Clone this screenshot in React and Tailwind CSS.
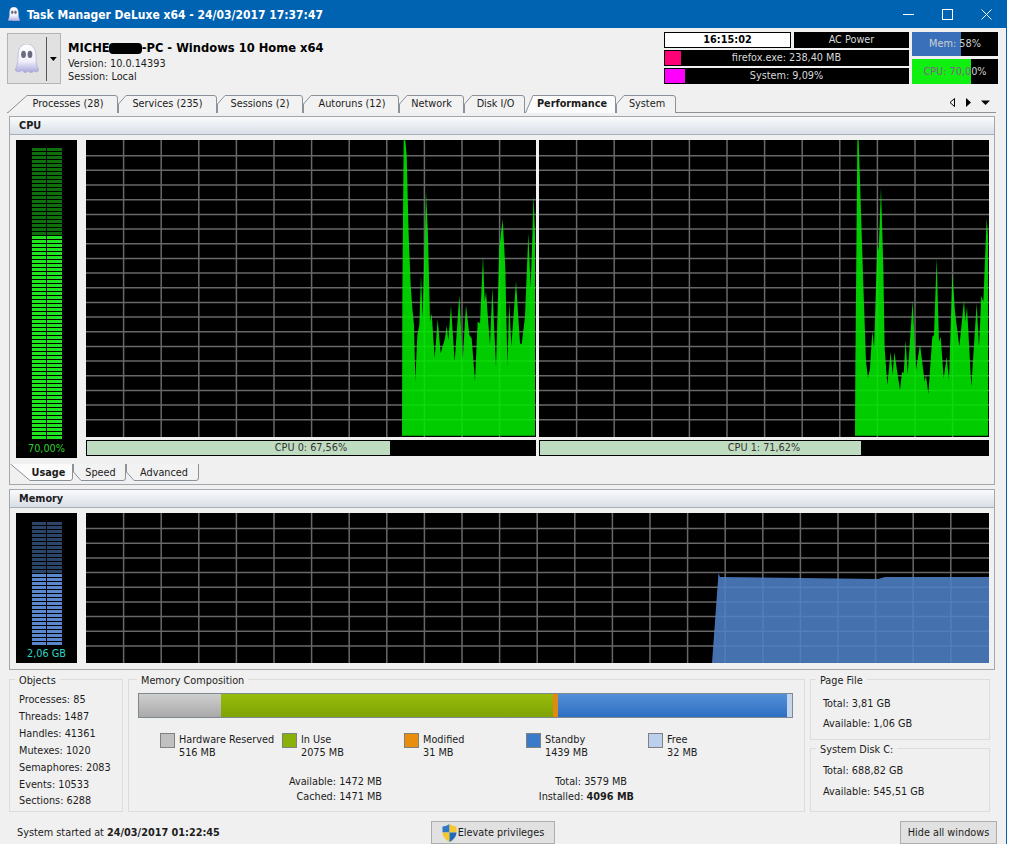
const cpu0 = [[66,902],[67,500],[71,16],[76,16],[80,60],[86,300],[92,450],[97,520],[102,570],[106,738],[112,600],[118,570],[123,420],[128,550],[138,170],[144,300],[150,560],[155,535],[164,670],[173,552],[182,655],[195,610],[200,572],[205,615],[213,512],[224,680],[238,480],[248,675],[258,510],[268,600],[275,610],[285,738],[293,560],[300,565],[309,362],[314,500],[318,470],[330,630],[337,458],[348,695],[358,340],[368,252],[376,400],[382,690],[388,500],[394,635],[408,438],[420,625],[425,628],[435,545],[445,295],[452,458],[461,180],[465,300],[465,902]]
const cpu1 = [[45,902],[46,700],[52,16],[56,16],[62,200],[70,450],[78,680],[84,730],[90,700],[97,588],[102,640],[112,330],[116,345],[123,158],[130,400],[134,640],[142,750],[152,650],[158,720],[163,652],[180,765],[186,710],[191,715],[197,615],[203,718],[218,497],[228,705],[240,628],[254,740],[258,720],[265,778],[277,605],[282,600],[290,370],[297,620],[302,605],[311,730],[320,665],[327,735],[337,415],[345,530],[358,635],[372,495],[376,560],[381,515],[394,755],[410,505],[417,635],[424,482],[430,500],[440,250],[444,300],[444,902]]

const topTabs = [
  { label: 'Processes (28)', w: 111, cls: 'w-[111px] pl-[11px]', slant: 20 },
  { label: 'Services (235)', w: 99, cls: 'w-[99px]' },
  { label: 'Sessions (2)', w: 86, cls: 'w-[86px]' },
  { label: 'Autoruns (12)', w: 96, cls: 'w-[96px] pl-[2px]' },
  { label: 'Network', w: 65, cls: 'w-[65px]' },
  { label: 'Disk I/O', w: 61, cls: 'w-[61px] pl-[2px]' },
  { label: 'Performance', w: 91, cls: 'w-[91px] pl-[3px]', slant: 8, active: true },
  { label: 'System', w: 60, cls: 'w-[60px] pl-[2px]' },
]

const subTabs = [
  { label: 'Usage', w: 63, cls: 'w-[63px] pl-[14px]', slant: 20, active: true },
  { label: 'Speed', w: 53, cls: 'w-[53px] pl-[2px]' },
  { label: 'Advanced', w: 73, cls: 'w-[73px] pl-[3px]' },
]

const objects = ['Processes: 85', 'Threads: 1487', 'Handles: 41361', 'Mutexes: 1020', 'Semaphores: 2083', 'Events: 10533', 'Sections: 6288']

const legend = [
  { name: 'Hardware Reserved', size: '516 MB', color: 'bg-[#c0c0c0]' },
  { name: 'In Use', size: '2075 MB', color: 'bg-[#8ab00a]' },
  { name: 'Modified', size: '31 MB', color: 'bg-[#e88e0c]' },
  { name: 'Standby', size: '1439 MB', color: 'bg-[#3a7ac8]' },
  { name: 'Free', size: '32 MB', color: 'bg-[#bcd0ee]' },
]

function Ghost({ size, id }) {
  return (
    <svg width={size} height={size * 1.2} viewBox="0 0 24 29" className="shrink-0">
      <defs>
        <linearGradient id={id} x1="0" y1="0" x2="0" y2="1">
          <stop offset="0" stopColor="#ffffff" />
          <stop offset="0.6" stopColor="#f2f0fb" />
          <stop offset="1" stopColor="#a9a6dc" />
        </linearGradient>
      </defs>
      <path
        d="M12 0C5 0 3 6 3 12C3 18 2 23 0 26C2 29 5 28 7 26.5C9 29 11 29.5 13 27C15 29.5 18 29 19 27C21 29 23 28 24 26C21 22 21 17 21 12C21 6 18 0 12 0Z"
        fill={`url(#${id})`}
        stroke="#9a98c8"
        strokeWidth="0.5"
      />
      <ellipse cx="8.5" cy="10.5" rx="2.4" ry="3.6" fill="#6b6b80" />
      <ellipse cx="15" cy="10.5" rx="2.4" ry="3.6" fill="#6b6b80" />
    </svg>
  )
}

function Shield() {
  return (
    <svg width="15" height="18" viewBox="0 0 15 18" className="shrink-0">
      <path d="M7.5 0C5.5 1.6 3 2.4 0.5 2.5V8.5H7.5Z" fill="#2f78c8" />
      <path d="M7.5 0C9.5 1.6 12 2.4 14.5 2.5V8.5H7.5Z" fill="#f6c62e" />
      <path d="M0.5 8.5C0.7 12.6 3.4 15.8 7.5 18V8.5Z" fill="#f6c62e" />
      <path d="M14.5 8.5C14.3 12.6 11.6 15.8 7.5 18V8.5Z" fill="#2468b8" />
    </svg>
  )
}

function Tab({ tab, bottom }) {
  const h = bottom ? 17 : 18
  const w = tab.w
  const s = tab.slant
  const d = s
    ? `M0.5 ${h} L${s} 0.5 H${w - 3} Q${w - 0.5} 0.5 ${w - 0.5} 3 V${h}`
    : `M0.5 ${h} V9 L8 0.5 H${w - 3} Q${w - 0.5} 0.5 ${w - 0.5} 3 V${h}`
  return (
    <div className={`relative flex items-center justify-center h-[18px] pt-px text-[10.8px] ${tab.cls} ${tab.active ? 'font-bold z-10' : ''}`}>
      <svg width={w} height={h} className={`absolute left-0 top-0 ${bottom ? '-scale-y-100' : ''}`}>
        <path d={d} fill={tab.active ? '#fbfbfb' : '#f2f2f2'} stroke="#8a9199" />
      </svg>
      <span className="relative">{tab.label}</span>
    </div>
  )
}

function Graph({ w, h, x0, y0, pts, fill }) {
  const verticals = []
  for (let x = 37.6; x < w; x += 37.6) verticals.push(x)
  const horizontals = []
  for (let y = y0; y < h - 12; y += 14.67) horizontals.push(y)
  return (
    <svg width={w} height={h} className="block bg-black shrink-0">
      {verticals.map(x => <line key={x} x1={x} x2={x} y1="0" y2={h} stroke="#686868" strokeWidth="1.5" />)}
      {horizontals.map(y => <line key={y} x1="0" x2={w} y1={y} y2={y} stroke="#686868" strokeWidth="1.5" />)}
      <polygon points={pts.map(p => `${p[0] / 3 + x0},${p[1] / 3 - 5}`).join(' ')} fill={fill} fillOpacity="0.88" />
    </svg>
  )
}

function Meter({ rows, lit, on, off, text, value, top, height }) {
  const cells = []
  for (let i = 0; i < rows; i++) {
    const cls = i >= rows - lit ? on : off
    cells.push(<div key={`a${i}`} className={`h-[3px] ${cls}`} />)
    cells.push(<div key={`b${i}`} className={`h-[3px] ${cls}`} />)
  }
  return (
    <div className={`w-[61px] ${height} bg-black flex flex-col items-center shrink-0 ${top}`}>
      <div className="grid grid-cols-2 gap-px w-[30px]">{cells}</div>
      <div className={`mt-auto h-[18px] pt-px flex items-center text-[10.8px] ${text}`}>{value}</div>
    </div>
  )
}

function Usage({ label, bar }) {
  return (
    <div className={`w-[450px] h-[16px] pt-px border border-black flex items-center justify-center text-[10.8px] text-[#333] ${bar}`}>
      {label}
    </div>
  )
}

function PanelHeader({ children }) {
  return (
    <div className="h-[18px] pt-[2px] px-[9px] flex items-center font-bold text-[10.8px] border-b border-[#a9b0b8] bg-linear-to-b from-[#fafbfc] to-[#d9dfe7]">
      {children}
    </div>
  )
}

function Group({ title, cls, left, children }) {
  return (
    <div className={`relative border border-[#dcdcdc] ${cls}`}>
      <div className={`absolute -top-[6px] px-[4px] bg-[#f0f0f0] text-[10.8px] leading-[14px] ${left}`}>{title}</div>
      {children}
    </div>
  )
}

export default function App() {
  return (
    <div className="w-[1007px] h-[844px] overflow-hidden bg-[#f0f0f0] border-r border-[#0063b1] text-[#1c1c1c] font-['DejaVu_Sans_Condensed','DejaVu_Sans',sans-serif] flex flex-col">
      {/* title bar */}
      <div className="h-[28px] shrink-0 bg-[#0063b1] flex items-center pl-[8px] text-white">
        <Ghost size={12} id="ghost-small" />
        <span className="ml-[7px] pt-px text-[12px] font-bold">Task Manager DeLuxe x64 - 24/03/2017 17:37:47</span>
        <div className="ml-auto flex h-full">
          <div className="w-[39px] flex items-center justify-center">
            <svg width="11" height="11"><path d="M0 5.5H11" stroke="#fff" /></svg>
          </div>
          <div className="w-[39px] flex items-center justify-center">
            <svg width="11" height="11"><rect x="0.5" y="0.5" width="10" height="10" fill="none" stroke="#fff" /></svg>
          </div>
          <div className="w-[39px] flex items-center justify-center">
            <svg width="11" height="11"><path d="M0.5 0.5L10.5 10.5M10.5 0.5L0.5 10.5" stroke="#fff" /></svg>
          </div>
        </div>
      </div>

      {/* header */}
      <div className="h-[67px] shrink-0 flex pl-[7px] pr-[8px]">
        <div className="mt-[5px] w-[54px] h-[51px] bg-[#e1e1e1] border border-[#b4b4b4] flex items-center">
          <div className="w-[39px] flex justify-center">
            <Ghost size={24} id="ghost-big" />
          </div>
          <div className="w-px h-[44px] bg-[#555]" />
          <svg width="13" height="6" viewBox="0 0 13 6"><path d="M3 1H10L6.5 5Z" fill="#000" /></svg>
        </div>
        <div className="ml-[7px] pt-[12px]">
          <div className="h-[16px] flex items-center text-[12.8px] font-bold text-black">
            MICHE<span className="inline-block w-[33px] h-[11px] bg-black rounded-sm -ml-[1px]" />-PC - Windows 10 Home x64
          </div>
          <div className="text-[10.8px] leading-[13px] mt-[1px]">Version: 10.0.14393</div>
          <div className="text-[10.8px] leading-[13px]">Session: Local</div>
        </div>
        <div className="ml-auto mt-[4px] flex gap-[3px] text-[10.8px]">
          <div className="w-[245px] flex flex-col gap-[2px]">
            <div className="flex gap-[3px] h-[16px]">
              <div className="w-[127px] pt-px bg-white border border-black flex items-center justify-center font-bold text-black">16:15:02</div>
              <div className="w-[115px] pt-px bg-black text-[#d8d8d8] flex items-center justify-center">AC Power</div>
            </div>
            <div className="h-[16px] pt-px flex items-center justify-center text-[#d8d8d8] border border-black bg-[linear-gradient(90deg,#ff0077_16px,#000_16px)]">firefox.exe: 238,40 MB</div>
            <div className="h-[16px] pt-px flex items-center justify-center text-[#d8d8d8] border border-black bg-[linear-gradient(90deg,#ff00ff_20px,#000_20px)]">System: 9,09%</div>
          </div>
          <div className="w-[86px] flex flex-col gap-[3px]">
            <div className="h-[24px] pt-px flex items-center justify-center text-[#d0d0d0] bg-[linear-gradient(90deg,#3a70ba_49px,#000_49px)]">Mem: 58%</div>
            <div className="h-[25px] pt-px flex items-center justify-center text-[#d0d0d0] bg-[linear-gradient(90deg,#10f010_59px,#000_59px)]">
              <span className="text-[#80608a]">CPU: 70,0</span>0%
            </div>
          </div>
        </div>
      </div>

      {/* tabs */}
      <div className="h-[18px] shrink-0 ml-[7px] mr-[10px] flex border-b border-[#8a9199]">
        {topTabs.map(t => <Tab key={t.label} tab={t} />)}
        <div className="ml-auto flex items-center gap-[9px] pb-[3px] pr-[6px]">
          <svg width="7" height="9"><path d="M5.5 0.5V8.5L1 4.5Z" fill="#f0f0f0" stroke="#000" /></svg>
          <svg width="7" height="9"><path d="M1 0V9L6 4.5Z" fill="#000" /></svg>
          <svg width="9" height="9"><path d="M0 2.5H9L4.5 7Z" fill="#000" /></svg>
        </div>
      </div>

      {/* CPU panel */}
      <div className="mt-[3px] ml-[9px] w-[986px] h-[369px] shrink-0 border border-[#a4a8ac]">
        <PanelHeader>CPU</PanelHeader>
        <div className="flex pt-[5px] pl-[6px]">
          <Meter rows={73} lit={51} on="bg-[#1fe41f]" off="bg-[#0d700d]" text="text-[#2fd02f]" value="70,00%" top="pt-[8px]" height="h-[318px]" />
          <div className="ml-[9px] flex gap-[3px]">
            <div className="flex flex-col gap-[3px]">
              <Graph w={450} h={297} x0={294} y0={15.7} pts={cpu0} fill="#00e800" />
              <Usage label="CPU 0: 67,56%" bar="bg-[linear-gradient(90deg,#c0dcc0_67.56%,#000_67.56%)]" />
            </div>
            <div className="flex flex-col gap-[3px]">
              <Graph w={450} h={297} x0={301} y0={15.7} pts={cpu1} fill="#00e800" />
              <Usage label="CPU 1: 71,62%" bar="bg-[linear-gradient(90deg,#c0dcc0_71.62%,#000_71.62%)]" />
            </div>
          </div>
        </div>
        <div className="flex mt-[6px]">
          {subTabs.map(t => <Tab key={t.label} tab={t} bottom />)}
        </div>
      </div>

      {/* Memory panel */}
      <div className="mt-[4px] ml-[9px] w-[986px] h-[181px] shrink-0 border border-[#a4a8ac]">
        <PanelHeader>Memory</PanelHeader>
        <div className="flex pt-[5px] pl-[6px]">
          <Meter rows={31} lit={18} on="bg-[#5a86cc]" off="bg-[#2c4468]" text="text-[#2fd6c6]" value="2,06 GB" top="pt-[9px]" height="h-[150px]" />
          <svg width="903" height="150" className="ml-[9px] block bg-black shrink-0">
            {Array.from({ length: 23 }, (_, i) => (i + 1) * 37.6).map(x => (
              <line key={x} x1={x} x2={x} y1="0" y2="150" stroke="#686868" strokeWidth="1.5" />
            ))}
            {Array.from({ length: 9 }, (_, i) => 15.6 + i * 14.67).map(y => (
              <line key={y} x1="0" x2="903" y1={y} y2={y} stroke="#686868" strokeWidth="1.5" />
            ))}
            <polygon points="626,150 632.5,60 634,64 792,66 799,64 903,64 903,150" fill="#4e82c6" fillOpacity="0.88" />
          </svg>
        </div>
      </div>

      {/* info groups */}
      <div className="mt-[9px] ml-[9px] flex gap-[5px] shrink-0 text-[10.8px]">
        <Group title="Objects" left="left-[5px]" cls="w-[114px] h-[133px] pt-[12px] pl-[9px]">
          {objects.map(o => <div key={o} className="h-[16.85px] flex items-center">{o}</div>)}
        </Group>
        <Group title="Memory Composition" left="left-[8px]" cls="w-[677px] h-[133px] pt-[13px] pl-[9px]">
          <div className="flex w-[655px] h-[25px] border border-[#7f8a90]">
            <div className="w-[82px] bg-linear-to-b from-[#cfcfcf] to-[#a9a9a9]" />
            <div className="w-[332px] bg-linear-to-b from-[#98bc0c] to-[#7ea304]" />
            <div className="w-[5px] bg-[#e08a14]" />
            <div className="w-[229px] bg-linear-to-b from-[#5590d8] to-[#2c6fc2]" />
            <div className="flex-1 bg-[#c4d6ee]" />
          </div>
          <div className="flex mt-[14px] ml-[22px]">
            {legend.map(l => (
              <div key={l.name} className="w-[122px] flex gap-[4px]">
                <div className={`w-[15px] h-[15px] mt-[1px] border border-[#808080] ${l.color}`} />
                <div className="leading-[13px] pt-px">
                  <div>{l.name}</div>
                  <div>{l.size}</div>
                </div>
              </div>
            ))}
          </div>
          <div className="flex mt-[15px] leading-[15px]">
            <div className="w-[244px] text-right">
              <div>Available: 1472 MB</div>
              <div>Cached: 1471 MB</div>
            </div>
            <div className="w-[252px] text-right">
              <div className="pr-[7px]">Total: 3579 MB</div>
              <div>Installed: <b>4096 MB</b></div>
            </div>
          </div>
        </Group>
        <div className="w-[180px] flex flex-col gap-[8px]">
          <Group title="Page File" left="left-[5px]" cls="h-[61px] pl-[12px] pt-[14px]">
            <div className="h-[20px] flex items-center">Total: 3,81 GB</div>
            <div className="h-[20px] flex items-center">Available: 1,06 GB</div>
          </Group>
          <Group title="System Disk C:" left="left-[5px]" cls="h-[64px] pl-[12px] pt-[12px]">
            <div className="h-[21px] flex items-center">Total: 688,82 GB</div>
            <div className="h-[21px] flex items-center">Available: 545,51 GB</div>
          </Group>
        </div>
      </div>

      {/* footer */}
      <div className="mt-[9px] h-[23px] shrink-0 flex items-center pl-[17px] pr-[9px] text-[10.8px]">
        <div className="w-[414px] pt-px">System started at <b>24/03/2017 01:22:45</b></div>
        <div className="w-[124px] h-[23px] pt-px bg-[#e1e1e1] border border-[#adadad] flex items-center justify-center gap-[1px]">
          <Shield />
          Elevate privileges
        </div>
        <div className="ml-auto w-[97px] h-[23px] pt-px bg-[#e1e1e1] border border-[#adadad] flex items-center justify-center">Hide all windows</div>
      </div>
    </div>
  )
}
